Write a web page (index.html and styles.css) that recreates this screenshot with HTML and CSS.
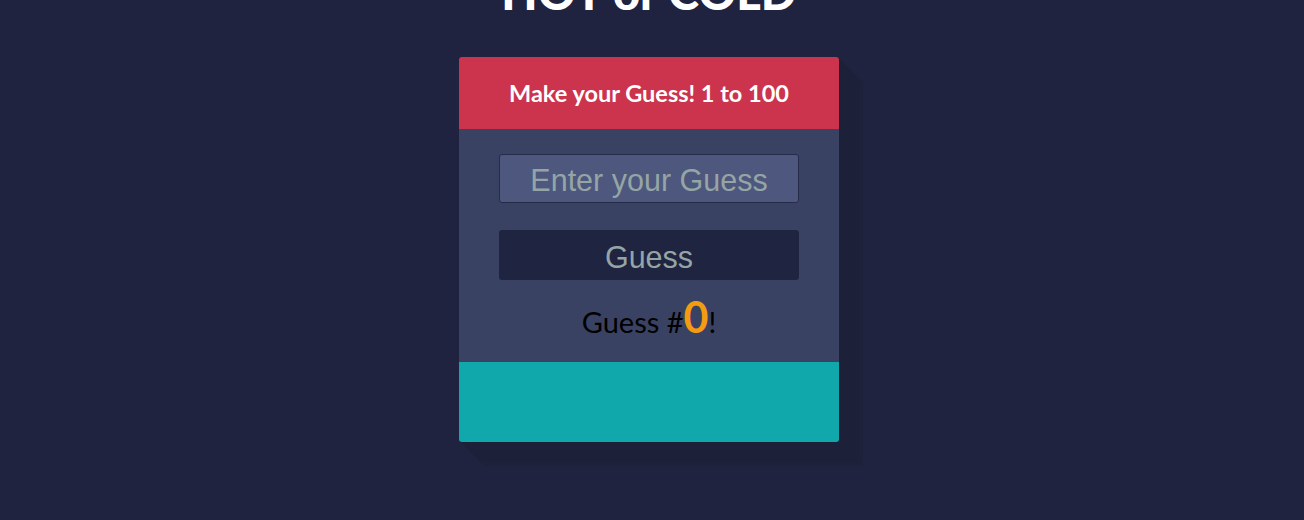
FILE: index.html
```html
<!DOCTYPE html>
<html>
<head>
<meta charset="utf-8">
<link rel="stylesheet" href="styles.css">
</head>
<body>
<h1 class="title">HOT or COLD</h1>
<div class="card">
  <div class="card-head">Make your Guess! 1 to 100</div>
  <div class="card-body">
    <input class="guess-input" type="text" placeholder="Enter your Guess">
    <button class="guess-btn">Guess</button>
    <p class="count">Guess #<span class="num">0</span>!</p>
  </div>
  <div class="card-foot"></div>
</div>
</body>
</html>
```
FILE: styles.css
```css
html, body {
  margin: 0;
  padding: 0;
  background: #1f233f;
  height: 100%;
  overflow: hidden;
}
body {
  font-family: Lato, "Liberation Sans", sans-serif;
  display: flex;
  flex-direction: column;
  align-items: center;
  padding-right: 6px;
  box-sizing: border-box;
}
.title {
  margin: -32px 0 0 0;
  font-family: Lato, sans-serif;
  font-weight: 900;
  font-size: 47px;
  line-height: 48px;
  color: #fff;
  height: 48px;
}
.card {
  margin-top: 41px;
  width: 380px;
  border-radius: 3px;
  box-shadow: 2px 2px 0 #1c2039, 4px 4px 0 #1c2039, 6px 6px 0 #1c2039, 8px 8px 0 #1c2039,
    10px 10px 0 #1c2039, 12px 12px 0 #1c2039, 14px 14px 0 #1c2039, 16px 16px 0 #1c2039,
    18px 18px 0 #1c2039, 20px 20px 0 #1c2039, 22px 22px 0 #1d2139, 24px 24px 0 #1d213a;
}
.card-head {
  background: #cc334d;
  color: #fff;
  height: 72px;
  display: flex;
  align-items: center;
  justify-content: center;
  font-weight: 700;
  font-size: 23.5px;
  border-radius: 3px 3px 0 0;
}
.card-body {
  background: #3a4264;
  height: 233px;
  display: flex;
  flex-direction: column;
  align-items: center;
  padding-top: 25px;
  box-sizing: border-box;
}
.guess-input {
  width: 300px;
  height: 49px;
  box-sizing: border-box;
  background: #4e577d;
  border: 1px solid #262b4a;
  border-radius: 3px;
  font-family: "Liberation Sans", Arial, sans-serif;
  font-size: 30.5px;
  text-align: center;
  color: #95a5a6;
  outline: none;
  padding: 4px 0 0 0;
}
.guess-input::placeholder {
  color: #95a5a6;
  opacity: 1;
}
.guess-btn {
  margin-top: 27px;
  width: 300px;
  height: 50px;
  background: #1f2440;
  border: none;
  border-radius: 3px;
  font-family: "Liberation Sans", Arial, sans-serif;
  font-size: 30.5px;
  color: #95a5a6;
  padding: 4px 0 0 0;
}
.count {
  margin: 16px 0 0 0;
  font-size: 29px;
  color: #000;
  line-height: 42px;
}
.num {
  color: #f39c12;
  font-weight: 700;
  font-size: 43px;
}
.card-foot {
  background: #11a8ab;
  height: 80px;
  border-radius: 0 0 3px 3px;
}
```
